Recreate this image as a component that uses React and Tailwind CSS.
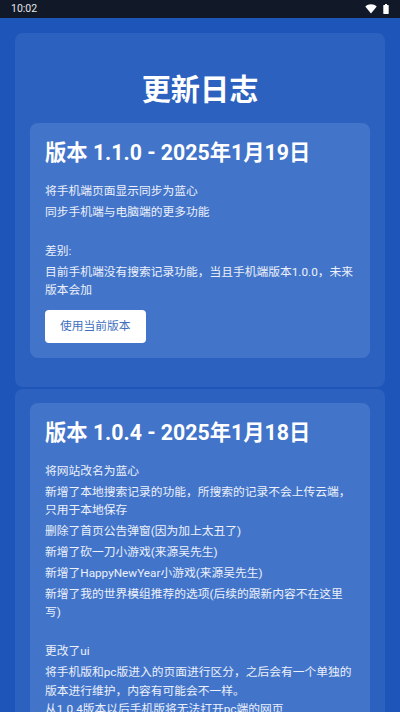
const releases = [
  {
    title: "版本 1.1.0 - 2025年1月19日",
    blocks: [
      ["将手机端页面显示同步为蓝心"],
      ["同步手机端与电脑端的更多功能", "", "差别:"],
      ["目前手机端没有搜索记录功能，当且手机端版本1.0.0，未来版本会加"],
    ],
    button: true,
  },
  {
    title: "版本 1.0.4 - 2025年1月18日",
    blocks: [
      ["将网站改名为蓝心"],
      ["新增了本地搜索记录的功能，所搜索的记录不会上传云端，只用于本地保存"],
      ["删除了首页公告弹窗(因为加上太丑了)"],
      ["新增了砍一刀小游戏(来源吴先生)"],
      ["新增了HappyNewYear小游戏(来源吴先生)"],
      ["新增了我的世界模组推荐的选项(后续的跟新内容不在这里写)", "", "更改了ui"],
      ["将手机版和pc版进入的页面进行区分，之后会有一个单独的版本进行维护，内容有可能会不一样。", "从1.0.4版本以后手机版将无法打开pc端的网页"],
    ],
  },
];

function StatusBar() {
  return (
    <div className="flex h-[18px] items-center justify-between bg-[#111827] pl-[11px] pr-[11px] text-[10.5px] text-[#e5e7eb]">
      <span>10:02</span>
      <div className="flex items-center gap-[6px]">
        <svg width="12" height="10" viewBox="0 0 12 10" fill="white">
          <path d="M0.3 2.4C1.9 1 3.8 0.2 6 0.2s4.1 0.8 5.7 2.2L6 9.4z" />
        </svg>
        <svg width="6" height="10" viewBox="0 0 6 10" fill="white">
          <path d="M2 0h2v1h1.2c0.3 0 0.5 0.2 0.5 0.5v8c0 0.3-0.2 0.5-0.5 0.5H0.8C0.5 10 0.3 9.800 0.3 9.500v-8C0.3 1.200 0.5 1 0.8 1H2z" />
        </svg>
      </div>
    </div>
  );
}

function ReleaseCard({ release }) {
  return (
    <div className="rounded-[8px] bg-[#4274c9] p-[15px]">
      <h2 className="mb-[14px] text-[21.3px] font-bold leading-[30px] text-white">{release.title}</h2>
      {release.blocks.map((lines, i) => (
        <p key={i} className="mb-[2.5px] text-[11.75px] leading-[18.4px] text-white/90">
          {lines.map((line, j) =>
            line ? (
              <span key={j} className="block">{line}</span>
            ) : (
              <span key={j} className="block h-[20.5px]" />
            )
          )}
        </p>
      ))}
      {release.button && (
        <button className="mt-[8px] h-[33px] rounded-[4px] bg-white px-[15px] text-[11.75px] text-[#3f6fbe]">
          使用当前版本
        </button>
      )}
    </div>
  );
}

export default function App() {
  return (
    <div className="h-[712px] overflow-hidden bg-[#1e55b8] font-['Roboto','Noto_Sans_CJK_SC',sans-serif]">
      <StatusBar />
      <div className="flex flex-col gap-[2px] px-[15px] pt-[15px]">
        <div className="rounded-[8px] bg-[#2c61c0] px-[15px] pb-[29px] pt-[40px]">
          <h1 className="mb-[15px] text-center text-[29.2px] font-bold leading-[35px] text-white">更新日志</h1>
          <ReleaseCard release={releases[0]} />
        </div>
        <div className="rounded-[8px] bg-[#2c61c0] px-[15px] py-[14px]">
          <ReleaseCard release={releases[1]} />
        </div>
      </div>
    </div>
  );
}
